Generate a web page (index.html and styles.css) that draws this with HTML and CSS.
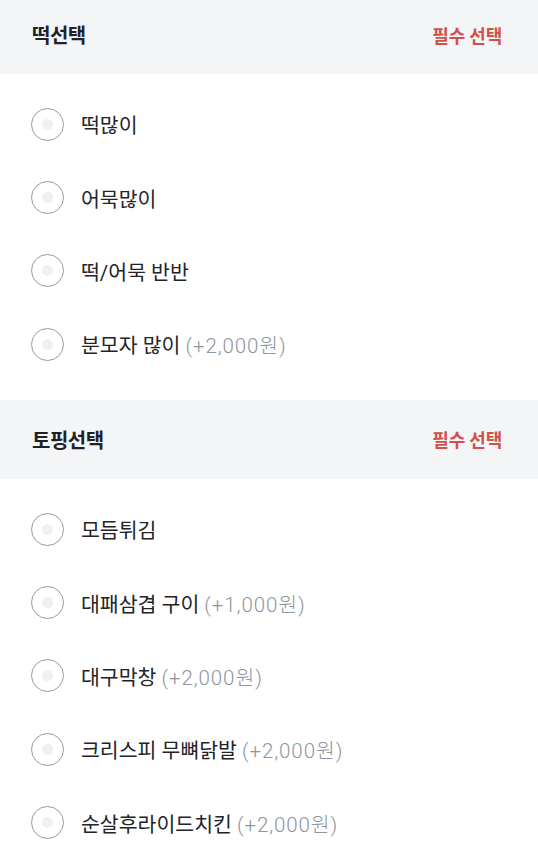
FILE: index.html
```html
<!DOCTYPE html>
<html lang="ko">
<head>
<meta charset="utf-8">
<link rel="stylesheet" href="styles.css">
</head>
<body>
<div class="page">
  <section class="group">
    <div class="group-head">
      <h2 class="group-title">떡선택</h2>
      <span class="required">필수 선택</span>
    </div>
    <ul class="options">
      <li class="option"><span class="radio"></span><span class="label">떡많이</span></li>
      <li class="option"><span class="radio"></span><span class="label">어묵많이</span></li>
      <li class="option"><span class="radio"></span><span class="label">떡/어묵 반반</span></li>
      <li class="option"><span class="radio"></span><span class="label">분모자 많이 <span class="price">(+2,000원)</span></span></li>
    </ul>
  </section>
  <section class="group">
    <div class="group-head">
      <h2 class="group-title">토핑선택</h2>
      <span class="required">필수 선택</span>
    </div>
    <ul class="options">
      <li class="option"><span class="radio"></span><span class="label">모듬튀김</span></li>
      <li class="option"><span class="radio"></span><span class="label">대패삼겹 구이 <span class="price">(+1,000원)</span></span></li>
      <li class="option"><span class="radio"></span><span class="label">대구막창 <span class="price">(+2,000원)</span></span></li>
      <li class="option"><span class="radio"></span><span class="label">크리스피 무뼈닭발 <span class="price">(+2,000원)</span></span></li>
      <li class="option"><span class="radio"></span><span class="label">순살후라이드치킨 <span class="price">(+2,000원)</span></span></li>
    </ul>
  </section>
</div>
</body>
</html>
```

FILE: styles.css
```css
* { box-sizing: border-box; }
html, body {
  margin: 0;
  padding: 0;
  background: #ffffff;
  overflow: hidden;
}
body {
  font-family: Roboto, "Noto Sans CJK KR", "Noto Sans", sans-serif;
  color: #222428;
}
.page {
  margin-top: -5px;
}
.group-head {
  height: 79px;
  background: #f4f5f7;
  display: flex;
  align-items: center;
  justify-content: space-between;
  padding: 0 36px 0 32px;
}
.group-title {
  margin: 0;
  font-size: 20px;
  font-weight: 700;
  color: #1e2227;
  letter-spacing: -0.5px;
}
.required {
  font-size: 18px;
  font-weight: 700;
  color: #d2504a;
  letter-spacing: -0.2px;
}
.options {
  list-style: none;
  margin: 0;
  padding: 13.67px 0 19px;
}
.option {
  height: 73.33px;
  display: flex;
  align-items: center;
  padding-left: 31px;
}
.radio {
  width: 33px;
  height: 33px;
  border-radius: 50%;
  border: 1.6px solid #959ba3;
  display: flex;
  align-items: center;
  justify-content: center;
  flex: none;
}
.radio::after {
  content: "";
  width: 11px;
  height: 11px;
  border-radius: 50%;
  background: #eff0f3;
}
.label {
  margin-left: 17px;
  font-size: 20.5px;
  color: #222428;
  letter-spacing: 0;
}
.price {
  color: #8e959e;
  font-weight: 300;
  letter-spacing: 0.9px;
}
```
